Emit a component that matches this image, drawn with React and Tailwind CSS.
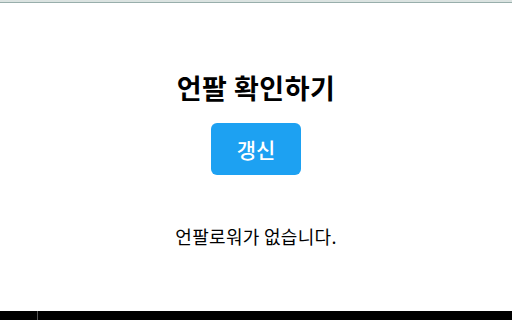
import React from 'react';

function App() {
  return (
    <div
      className="w-[512px] h-[320px] flex flex-col bg-white overflow-hidden"
      style={{ fontFamily: '"Noto Sans CJK KR", "Noto Sans", sans-serif' }}
    >
      {/* top edge */}
      <div className="h-[3px] shrink-0 bg-[#dbe3e1] border-b border-[#98aeab]"></div>

      <main className="flex-1 flex flex-col items-center pt-[70px]">
        <h1 className="text-[27px] leading-[30px] font-bold text-black tracking-[0.5px]">언팔 확인하기</h1>
        <button className="mt-[20px] w-[90px] h-[52px] rounded-[6px] bg-[#1da1f2] text-white text-[21px] font-medium leading-none">
          갱신
        </button>
        <p className="mt-[49px] text-[18px] leading-[24px] text-black tracking-[0.3px]">언팔로워가 없습니다.</p>
      </main>

      {/* bottom bar */}
      <div className="h-[9px] shrink-0 bg-black flex">
        <div className="ml-[37px] w-px h-full bg-[#555]"></div>
      </div>
    </div>
  );
}

export default App;
